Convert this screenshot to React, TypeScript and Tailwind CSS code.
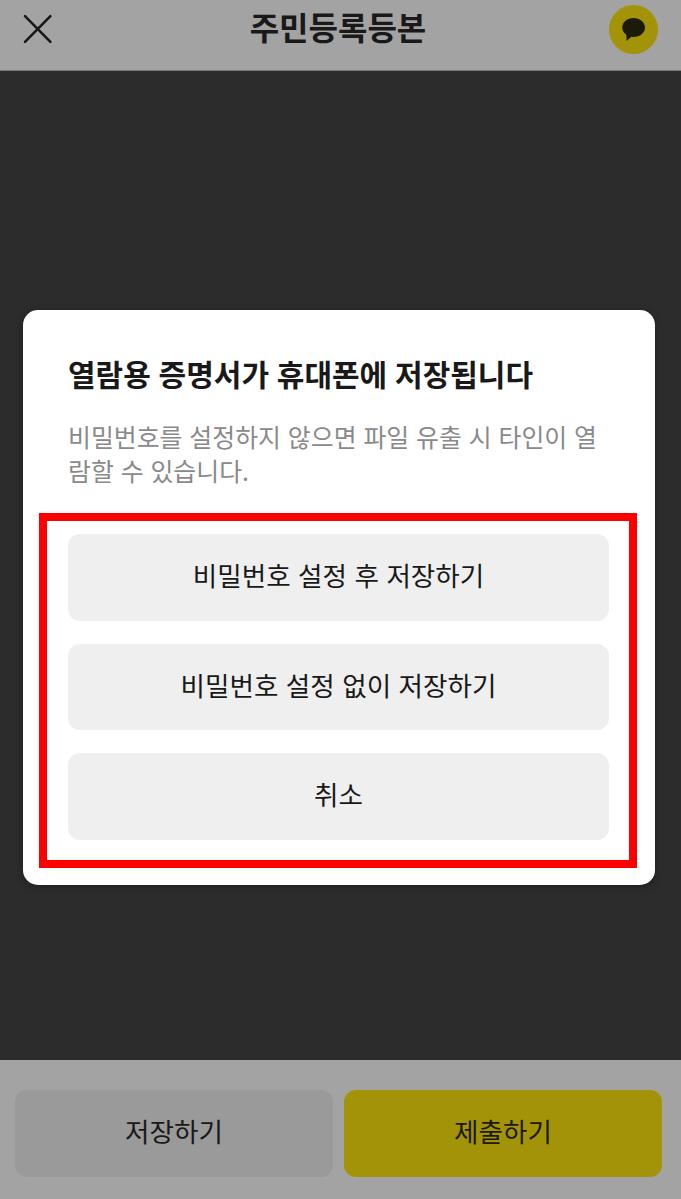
import React from 'react';

const actions = ['비밀번호 설정 후 저장하기', '비밀번호 설정 없이 저장하기', '취소'];

const Header: React.FC = () => (
  <header className="flex h-[71px] items-start justify-between border-b border-[#777777] bg-[#a3a3a3] pr-[23px] pl-[23px]">
    <button aria-label="닫기" className="mt-[14px] w-[44px]">
      <svg width="30" height="30" viewBox="0 0 30 30" fill="none" stroke="#171717" strokeWidth="2.5" strokeLinecap="round">
        <path d="M2 2.2 27.4 27.8M27.4 2.2 2 27.8" />
      </svg>
    </button>
    <h1 className="mt-[3px] text-[32px] leading-[46px] font-bold text-[#191919]">주민등록등본</h1>
    <button aria-label="채팅" className="mt-[5px] flex h-[49px] w-[49px] rounded-full bg-[#a39308]">
      <svg width="49" height="49" viewBox="0 0 49 49" fill="#1c1a0b">
        <path d="M24.6 12.9c-6.3 0-11.4 4.2-11.4 9.6 0 2.9 1.6 5.6 4.1 7.3l.3 6.2 4.8-4.2c.7.1 1.4.2 2.2.2 6.3 0 11.4-4.2 11.4-9.5s-5.1-9.6-11.4-9.6Z" />
      </svg>
    </button>
  </header>
);

const SaveDialog: React.FC = () => (
  <div role="dialog" className="h-[575px] w-[631.5px] rounded-[15px] bg-white px-4 pt-[40px] shadow-[0_2px_8px_rgba(0,0,0,0.3)]">
    <h2 className="pl-[29px] text-[30px] leading-[46px] font-bold [word-spacing:1px] whitespace-nowrap text-[#191919]">
      열람용 증명서가 휴대폰에 저장됩니다
    </h2>
    <p className="mt-[23px] pl-[29px] text-[24.9px] leading-[34px] font-normal [word-spacing:1.3px] whitespace-nowrap text-[#8a8a8a]">
      비밀번호를 설정하지 않으면 파일 유출 시 타인이 열
      <br />
      람할 수 있습니다.
    </p>
    <div className="mt-[26px] flex h-[355px] w-[598px] flex-col gap-[23px] border-8 border-[#ff0000] pt-[13px] pr-5 pl-[21px]">
      {actions.map((label) => (
        <button key={label} className="h-[86.5px] rounded-[12px] bg-[#efefef] pb-[4px] text-[26.6px] [word-spacing:1.5px] text-[#191919]">
          {label}
        </button>
      ))}
    </div>
  </div>
);

export default function App() {
  return (
    <div className="flex h-[1199px] w-[681px] flex-col overflow-hidden bg-[#2c2c2c] font-['Noto_Sans_CJK_KR',sans-serif]">
      <Header />
      <main className="flex-1 pt-[239px] pl-[23px]">
        <SaveDialog />
      </main>
      <footer className="flex h-[139px] gap-[11px] bg-[#a3a3a3] pt-[30px] pr-[19px] pl-[15px]">
        <button className="h-[87px] flex-1 rounded-[12px] bg-[#9a9a9a] pb-[5px] text-[26.6px] text-[#191919]">저장하기</button>
        <button className="h-[87px] flex-1 rounded-[12px] bg-[#a39308] pb-[5px] text-[26.6px] text-[#1c1a0b]">제출하기</button>
      </footer>
    </div>
  );
}
